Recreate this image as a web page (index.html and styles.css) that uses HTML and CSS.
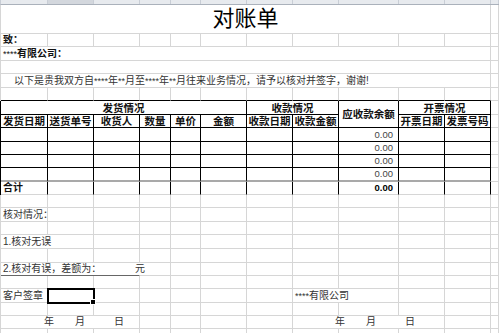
FILE: index.html
```html
<!DOCTYPE html>
<html lang="zh">
<head>
<meta charset="utf-8">
<title>对账单</title>
<link rel="stylesheet" href="styles.css">
</head>
<body>
<div class="colbar">
  <span></span><span class="sel"></span><span></span><span></span><span></span><span></span><span></span><span></span><span></span><span></span><span></span><span></span>
</div>
<div class="sheet">
  <!-- R0 title -->
  <div class="c s11 title">对账单</div><div class="c"></div>
  <!-- R1 -->
  <div class="c b">致：</div><div class="c"></div><div class="c"></div><div class="c"></div><div class="c"></div><div class="c"></div><div class="c"></div><div class="c"></div><div class="c"></div><div class="c"></div><div class="c"></div><div class="c"></div>
  <!-- R2 -->
  <div class="c s11 b"><span class="ast">****</span>有限公司：</div><div class="c"></div>
  <!-- R3 -->
  <div class="c s11"></div><div class="c"></div>
  <!-- R4 -->
  <div class="c s11 intro">以下是贵我双方自<span class="ast">****</span>年<span class="ast">**</span>月至<span class="ast">****</span>年<span class="ast">**</span>月往来业务情况，请予以核对并签字，谢谢!</div><div class="c"></div>
  <!-- R5 -->
  <div class="c tb"></div><div class="c tb"></div><div class="c tb"></div><div class="c tb"></div><div class="c tb"></div><div class="c tb"></div><div class="c tb"></div><div class="c tb"></div><div class="c tb"></div><div class="c tb"></div><div class="c tb"></div><div class="c"></div>
  <!-- R6 header 1 -->
  <div class="c t h s6 first">发货情况</div><div class="c t h s2">收款情况</div><div class="c t h rs2">应收款余额</div><div class="c t h s2">开票情况</div><div class="c"></div>
  <!-- R7 header 2 -->
  <div class="c t h first">发货日期</div><div class="c t h">送货单号</div><div class="c t h">收货人</div><div class="c t h">数量</div><div class="c t h">单价</div><div class="c t h">金额</div><div class="c t h">收款日期</div><div class="c t h">收款金额</div><div class="c t h">开票日期</div><div class="c t h">发票号码</div><div class="c"></div>
  <!-- R8 -->
  <div class="c t first"></div><div class="c t"></div><div class="c t"></div><div class="c t"></div><div class="c t"></div><div class="c t"></div><div class="c t"></div><div class="c t"></div><div class="c t num">0.00</div><div class="c t"></div><div class="c t"></div><div class="c"></div>
  <!-- R9 -->
  <div class="c t first"></div><div class="c t"></div><div class="c t"></div><div class="c t"></div><div class="c t"></div><div class="c t"></div><div class="c t"></div><div class="c t"></div><div class="c t num">0.00</div><div class="c t"></div><div class="c t"></div><div class="c"></div>
  <!-- R10 -->
  <div class="c t first"></div><div class="c t"></div><div class="c t"></div><div class="c t"></div><div class="c t"></div><div class="c t"></div><div class="c t"></div><div class="c t"></div><div class="c t num">0.00</div><div class="c t"></div><div class="c t"></div><div class="c"></div>
  <!-- R11 -->
  <div class="c t dbl first"></div><div class="c t dbl"></div><div class="c t dbl"></div><div class="c t dbl"></div><div class="c t dbl"></div><div class="c t dbl"></div><div class="c t dbl"></div><div class="c t dbl"></div><div class="c t dbl num">0.00</div><div class="c t dbl"></div><div class="c t dbl"></div><div class="c"></div>
  <!-- R12 total -->
  <div class="c tr b first">合计</div><div class="c tr"></div><div class="c tr"></div><div class="c tr"></div><div class="c tr"></div><div class="c tr"></div><div class="c tr"></div><div class="c tr"></div><div class="c tr num b">0.00</div><div class="c tr"></div><div class="c tr"></div><div class="c"></div>
  <!-- R13 -->
  <div class="c"></div><div class="c"></div><div class="c"></div><div class="c"></div><div class="c"></div><div class="c"></div><div class="c"></div><div class="c"></div><div class="c"></div><div class="c"></div><div class="c"></div><div class="c"></div>
  <!-- R14 -->
  <div class="c txt">核对情况：</div><div class="c"></div><div class="c"></div><div class="c"></div><div class="c"></div><div class="c"></div><div class="c"></div><div class="c"></div><div class="c"></div><div class="c"></div><div class="c"></div><div class="c"></div>
  <!-- R15 -->
  <div class="c"></div><div class="c"></div><div class="c"></div><div class="c"></div><div class="c"></div><div class="c"></div><div class="c"></div><div class="c"></div><div class="c"></div><div class="c"></div><div class="c"></div><div class="c"></div>
  <!-- R16 -->
  <div class="c s2 txt">1.核对无误</div><div class="c"></div><div class="c"></div><div class="c"></div><div class="c"></div><div class="c"></div><div class="c"></div><div class="c"></div><div class="c"></div><div class="c"></div><div class="c"></div>
  <!-- R17 -->
  <div class="c"></div><div class="c"></div><div class="c"></div><div class="c"></div><div class="c"></div><div class="c"></div><div class="c"></div><div class="c"></div><div class="c"></div><div class="c"></div><div class="c"></div><div class="c"></div>
  <!-- R18 -->
  <div class="c s3 txt ul"><span>2.核对有误，差额为：</span><span class="yuan">元</span></div><div class="c"></div><div class="c"></div><div class="c"></div><div class="c"></div><div class="c"></div><div class="c"></div><div class="c"></div><div class="c"></div><div class="c"></div>
  <!-- R19 -->
  <div class="c"></div><div class="c"></div><div class="c"></div><div class="c"></div><div class="c"></div><div class="c"></div><div class="c"></div><div class="c"></div><div class="c"></div><div class="c"></div><div class="c"></div><div class="c"></div>
  <!-- R20 -->
  <div class="c txt">客户签章</div><div class="c active"></div><div class="c"></div><div class="c"></div><div class="c"></div><div class="c"></div><div class="c"></div><div class="c s2 txt"><span class="ast">****</span>有限公司</div><div class="c"></div><div class="c"></div><div class="c"></div>
  <!-- R21 -->
  <div class="c"></div><div class="c"></div><div class="c"></div><div class="c"></div><div class="c"></div><div class="c"></div><div class="c"></div><div class="c"></div><div class="c"></div><div class="c"></div><div class="c"></div><div class="c"></div>
  <!-- R22 -->
  <div class="c s3 txt ymd ymd-l"><span class="y">年</span><span class="m">月</span><span class="d">日</span></div><div class="c"></div><div class="c"></div><div class="c"></div><div class="c"></div><div class="c s3 txt ymd ymd-r"><span class="y">年</span><span class="m">月</span><span class="d">日</span></div><div class="c"></div><div class="c"></div>
  <!-- R23 -->
  <div class="c"></div><div class="c"></div><div class="c"></div><div class="c"></div><div class="c"></div><div class="c"></div><div class="c"></div><div class="c"></div><div class="c"></div><div class="c"></div><div class="c"></div><div class="c"></div>
</div>
</body>
</html>
```

FILE: styles.css
```css
:root {
  --g: #d6d6d6;
  --cols: 47px 46px 46px 31px 30px 46px 46px 46px 60px 46px 46px 8px;
}
html, body {
  margin: 0;
  padding: 0;
  background: #fff;
  overflow: hidden;
}
body {
  width: 499px;
  height: 333px;
  font-family: "Liberation Sans", "Noto Sans CJK SC", sans-serif;
  color: #222;
}
.colbar {
  display: grid;
  grid-template-columns: var(--cols);
  height: 4px;
  border-left: 1px solid #c9ced6;
  border-bottom: 1px solid #aab1bb;
  background: #e7eaee;
}
.colbar span {
  display: block;
  border-right: 1px solid #c9ced6;
}
.colbar .sel {
  background: #d3d7dd;
}
.sheet {
  display: grid;
  grid-template-columns: var(--cols);
  grid-template-rows: 29px 13px 14px 13px 14px 13px 14px 13px 14px 13px 13px 14px 13px 13px 14px 13px 14px 14px 13px 13px 14px 13px 13px 14px;
  border-left: 1px solid var(--g);
}
.c {
  box-sizing: border-box;
  border-right: 1px solid var(--g);
  border-bottom: 1px solid var(--g);
  display: flex;
  align-items: center;
  min-width: 0;
  padding: 0 2px;
  font-size: 10px;
  line-height: 12px;
  white-space: nowrap;
}
.s2 { grid-column: span 2; }
.s3 { grid-column: span 3; }
.s6 { grid-column: span 6; }
.s11 { grid-column: span 11; }
.rs2 { grid-row: span 2; }

.title {
  justify-content: center;
  font-size: 22px;
  line-height: 26px;
  color: #000;
}
.b { font-weight: 700; color: #111; }
.ast { font-weight: 400; font-size: 9px; }
.intro {
  padding-left: 13px;
  color: #333;
}
.tb { border-bottom-color: #000; }
.t {
  border-right-color: #000;
  border-bottom-color: #000;
}
.tr { border-right-color: #000; }
.first { box-shadow: -1px 0 0 #000; }
.dbl { border-bottom: 2px solid #a9a9a9; }
.h {
  justify-content: center;
  font-weight: 700;
  font-size: 10.5px;
  color: #111;
  padding: 0;
}
.num {
  justify-content: flex-end;
  padding-right: 5px;
  color: #444;
  font-size: 9.5px;
}
.num.b { color: #000; }
.txt { color: #333; }
.ul {
  border-bottom-color: #666;
  border-right-color: transparent;
  justify-content: space-between;
}
.yuan { margin-right: -8px; }
.active {
  position: relative;
  z-index: 2;
  outline: 2px solid #000;
  outline-offset: -1px;
}
.active::after {
  content: "";
  position: absolute;
  right: -3px;
  bottom: -3px;
  width: 4px;
  height: 4px;
  background: #000;
  border: 1px solid #fff;
}
.ymd { padding: 0; }
.ymd-l .y { margin-left: 43px; }
.ymd-r .y { margin-left: 42px; }
.ymd .m { margin-left: 21px; }
.ymd .d { margin-left: 29px; }
```
